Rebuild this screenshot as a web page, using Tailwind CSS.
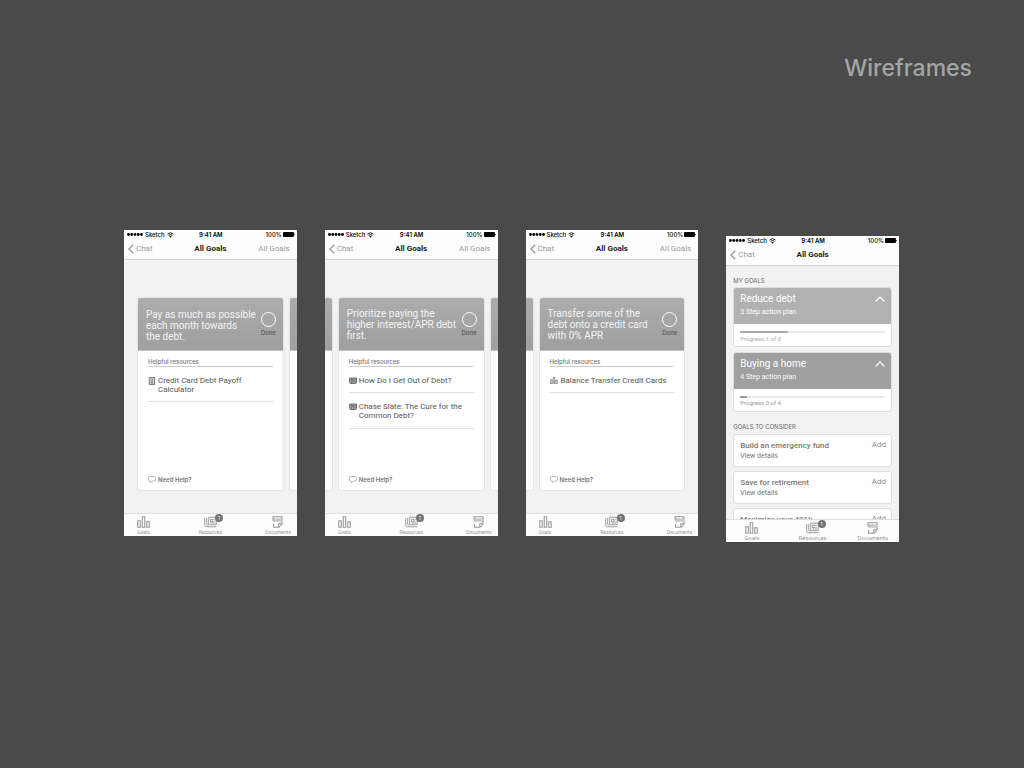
<!DOCTYPE html>
<html lang="en">
<head>
<meta charset="utf-8">
<meta name="viewport" content="width=device-width, initial-scale=1">
<title>Wireframes</title>
<script src="https://cdn.jsdelivr.net/npm/@tailwindcss/browser@4"></script>
</head>
<body class="min-h-screen bg-[#4a4a4a] font-['Roboto','Liberation_Sans',sans-serif] text-[#666]">
<svg class="hidden" aria-hidden="true">
  <symbol id="dots" viewBox="0 0 32 6"><g fill="currentColor"><circle cx="3" cy="3" r="2.800"/><circle cx="9.500" cy="3" r="2.800"/><circle cx="16" cy="3" r="2.800"/><circle cx="22.500" cy="3" r="2.800"/><circle cx="29" cy="3" r="2.800"/></g></symbol>
  <symbol id="wifi" viewBox="0 0 14 12"><path d="M7 11.500 4.600 8.500a3.500 3.500 0 0 1 4.800 0z" fill="currentColor"/><path d="M3.200 6.800a5.500 5.500 0 0 1 7.600 0M1 4.200a8.700 8.700 0 0 1 12 0" fill="none" stroke="currentColor" stroke-width="1.800"/></symbol>
  <symbol id="battery" viewBox="0 0 22 9"><rect width="20" height="9" rx="1.500" fill="currentColor"/><path d="M20.500 3c2 0 2 3 0 3z" fill="currentColor"/></symbol>
  <symbol id="back" viewBox="0 0 12 20"><path d="M10.500 1.500 2 10l8.500 8.500" fill="none" stroke="currentColor" stroke-width="2.600"/></symbol>
  <symbol id="up" viewBox="0 0 20 12"><path d="M1.500 10.500 10 2l8.500 8.500" fill="none" stroke="currentColor" stroke-width="2.400"/></symbol>
  <symbol id="bars" viewBox="0 0 26 24"><path d="M1.500 9.500h5v13h-5zM10.500 1.500h5v21h-5zM19.500 11.500h5v11h-5z" fill="none" stroke="currentColor" stroke-width="2.200"/></symbol>
  <symbol id="news" viewBox="0 0 26 24"><path d="M1.500 4v14.500c0 2 1 3 3 3h20M5.500 4v12.500c0 2.500 4 2.500 4 0V2.500h15v15H9.500M13 6.500h5V11h-5zM20.500 6.500h2M20.500 10.500h2M13 14h9.500" fill="none" stroke="currentColor" stroke-width="1.900"/></symbol>
  <symbol id="newsfill" viewBox="0 0 16 14"><path d="M1 2h14v9.500l-1.500 1.500h-11L1 11.500z" fill="#aaa" stroke="currentColor" stroke-width="1.800"/><path d="M5 2v10M7 4.500h3V7H7zM12 5h3M7 9.500h7" fill="none" stroke="currentColor" stroke-width="1.400"/></symbol>
  <symbol id="doc" viewBox="0 0 22 24"><path d="M2 9V1.500h18V16l-6 6.500H3V16M20 15.500h-6.500v6.500" fill="none" stroke="currentColor" stroke-width="2.100"/><path d="M3.500 5.500h3v5h-3zM9.500 5.500h3v5h-3zM18.500 5.500h-3v5h3" fill="none" stroke="currentColor" stroke-width="1.500"/></symbol>
  <symbol id="calc" viewBox="0 0 12 15"><path d="M1 1h10v13H1z" fill="#ddd" stroke="currentColor" stroke-width="1.600"/><path d="M3 4h6M3 7.500h6M3 11h6M6 7v5" stroke="currentColor" stroke-width="1.200"/></symbol>
  <symbol id="chat" viewBox="0 0 16 14"><path d="M3.500 1h9A2.500 2.500 0 0 1 15 3.500v4a2.500 2.500 0 0 1-2.500 2.500H8l-3.500 3V10h-1A2.500 2.500 0 0 1 1 7.500v-4A2.500 2.500 0 0 1 3.500 1z" fill="none" stroke="currentColor" stroke-width="1.300"/></symbol>
</svg>

<header class="flex justify-end pt-[50px] pr-[52px]">
  <h1 class="font-['Inter','Liberation_Sans',sans-serif] text-[23px] leading-9 font-medium text-[#a2a6a5]">Wireframes</h1>
</header>

<main class="grid grid-cols-4 items-start gap-7 pt-[144px] pr-[125px] pl-[124px]">

  <section class="flex h-[306px] flex-col overflow-hidden bg-[#f2f2f2]">
    <div class="grid grid-cols-3 items-center bg-[#fdfdfd] pr-[2px] pl-[3px] font-['Inter','Liberation_Sans',sans-serif] text-[6px] leading-[9px] font-medium text-black">
      <div class="flex items-center gap-[2px]"><svg class="h-[3px] w-[16px] shrink-0"><use href="#dots"/></svg><span>Sketch</span><svg class="h-[6px] w-[7px] shrink-0"><use href="#wifi"/></svg></div>
      <span class="text-center font-semibold">9:41 AM</span>
      <div class="flex items-center justify-end gap-px">100%<svg class="h-[5px] w-[12px]"><use href="#battery"/></svg></div>
    </div>
    <nav class="grid grid-cols-3 items-center border-b border-[#d4d4d4] bg-[#fdfdfd] px-[4px] text-[8px] leading-[20px] text-[#999]">
      <a href="#" class="flex items-center gap-[2px]"><svg class="h-[10px] w-[6px]"><use href="#back"/></svg>Chat</a>
      <h2 class="text-center font-bold text-[#222]">All Goals</h2>
      <a href="#" class="pr-[3px] text-right whitespace-nowrap">All Goals</a>
    </nav>
    <div class="flex flex-1 gap-[7px] pt-[38px] pb-[23px]">
      <div class="w-[7px]"></div>
      <article class="flex flex-1 flex-col overflow-hidden rounded-[2px] bg-white shadow-[0_0_2px_rgba(0,0,0,0.2)]">
        <header class="flex h-[53px] items-center justify-between border-b border-[#c4c4c4] bg-linear-to-b from-[#acacac] to-[#9f9f9f] pr-[7px] pl-[8px] text-[#f4f4f4]">
          <h3 class="pt-[2px] text-[10px] leading-[11px] whitespace-nowrap">Pay as much as possible<br>each month towards<br>the debt.</h3>
          <label class="flex w-[15px] flex-col items-center gap-[2px] font-['Inter','Liberation_Sans',sans-serif] text-[6px] leading-[8px] font-medium text-[#555]"><input type="checkbox" class="size-[15px] appearance-none rounded-full border border-white checked:bg-white">Done</label>
        </header>
        <div class="flex flex-1 flex-col px-[10px] pt-[7px] pb-[6px]">
          <h4 class="border-b border-[#ccc] font-['Inter','Liberation_Sans',sans-serif] text-[6px] leading-[8px] font-medium text-[#777]">Helpful resources</h4>
          <ul class="text-[8px] leading-[9px] text-[#555]">
            <li class="border-b border-[#ddd] pt-[9px] pb-[7px]"><a href="#" class="flex gap-[2px]"><svg class="mt-px h-[8px] w-[8px] shrink-0 text-[#666]"><use href="#calc"/></svg><span>Credit Card Debt Payoff<br>Calculator</span></a></li>
          </ul>
          <a href="#" class="mt-auto flex items-center gap-[2px] font-['Inter','Liberation_Sans',sans-serif] text-[6px] leading-[9px] font-semibold text-[#777]"><svg class="h-[7px] w-[8px] text-[#999]"><use href="#chat"/></svg>Need Help?</a>
        </div>
      </article>
      <div class="w-[7px] overflow-hidden rounded-l-[2px] bg-white shadow-[0_0_2px_rgba(0,0,0,0.2)]"><div class="h-[53px] border-b border-[#c4c4c4] bg-linear-to-b from-[#acacac] to-[#9f9f9f]"></div></div>
    </div>
    <nav class="grid grid-cols-3 border-t border-[#ddd] bg-[#fdfdfd] pt-[2px] pr-[6px] pb-px pl-[13px] text-[5px] leading-[6px] text-[#999]">
      <a href="#" class="flex flex-col items-center gap-px justify-self-start"><svg class="h-[12px] w-[13px]"><use href="#bars"/></svg>Goals</a>
      <a href="#" class="relative -ml-[7px] flex flex-col items-center gap-px justify-self-center"><svg class="h-[12px] w-[13px]"><use href="#news"/></svg>Resources<span class="absolute -top-[2px] -right-px size-[8px] rounded-full bg-[#737373] text-center text-[5px] leading-[8px] text-white">1</span></a>
      <a href="#" class="flex flex-col items-center gap-px justify-self-end"><svg class="h-[12px] w-[11px]"><use href="#doc"/></svg>Documents</a>
    </nav>
  </section>

  <section class="flex h-[306px] flex-col overflow-hidden bg-[#f2f2f2]">
    <div class="grid grid-cols-3 items-center bg-[#fdfdfd] pr-[2px] pl-[3px] font-['Inter','Liberation_Sans',sans-serif] text-[6px] leading-[9px] font-medium text-black">
      <div class="flex items-center gap-[2px]"><svg class="h-[3px] w-[16px] shrink-0"><use href="#dots"/></svg><span>Sketch</span><svg class="h-[6px] w-[7px] shrink-0"><use href="#wifi"/></svg></div>
      <span class="text-center font-semibold">9:41 AM</span>
      <div class="flex items-center justify-end gap-px">100%<svg class="h-[5px] w-[12px]"><use href="#battery"/></svg></div>
    </div>
    <nav class="grid grid-cols-3 items-center border-b border-[#d4d4d4] bg-[#fdfdfd] px-[4px] text-[8px] leading-[20px] text-[#999]">
      <a href="#" class="flex items-center gap-[2px]"><svg class="h-[10px] w-[6px]"><use href="#back"/></svg>Chat</a>
      <h2 class="text-center font-bold text-[#222]">All Goals</h2>
      <a href="#" class="pr-[3px] text-right whitespace-nowrap">All Goals</a>
    </nav>
    <div class="flex flex-1 gap-[7px] pt-[38px] pb-[23px]">
      <div class="w-[7px] overflow-hidden rounded-r-[2px] bg-white shadow-[0_0_2px_rgba(0,0,0,0.2)]"><div class="h-[53px] border-b border-[#c4c4c4] bg-linear-to-b from-[#acacac] to-[#9f9f9f]"></div></div>
      <article class="flex flex-1 flex-col overflow-hidden rounded-[2px] bg-white shadow-[0_0_2px_rgba(0,0,0,0.2)]">
        <header class="flex h-[53px] items-center justify-between border-b border-[#c4c4c4] bg-linear-to-b from-[#acacac] to-[#9f9f9f] pr-[7px] pl-[8px] text-[#f4f4f4]">
          <h3 class="text-[10px] leading-[11px] whitespace-nowrap">Prioritize paying the<br>higher interest/APR debt<br>first.</h3>
          <label class="flex w-[15px] flex-col items-center gap-[2px] font-['Inter','Liberation_Sans',sans-serif] text-[6px] leading-[8px] font-medium text-[#555]"><input type="checkbox" class="size-[15px] appearance-none rounded-full border border-white checked:bg-white">Done</label>
        </header>
        <div class="flex flex-1 flex-col px-[10px] pt-[7px] pb-[6px]">
          <h4 class="border-b border-[#ccc] font-['Inter','Liberation_Sans',sans-serif] text-[6px] leading-[8px] font-medium text-[#777]">Helpful resources</h4>
          <ul class="text-[8px] leading-[9px] text-[#555]">
            <li class="border-b border-[#ddd] pt-[9px] pb-[7px]"><a href="#" class="flex gap-[2px]"><svg class="mt-px h-[7px] w-[8px] shrink-0 text-[#666]"><use href="#newsfill"/></svg><span class="whitespace-nowrap">How Do I Get Out of Debt?</span></a></li>
            <li class="border-b border-[#ddd] pt-[9px] pb-[8px]"><a href="#" class="flex gap-[2px]"><svg class="mt-px h-[7px] w-[8px] shrink-0 text-[#666]"><use href="#newsfill"/></svg><span class="whitespace-nowrap">Chase Slate: The Cure for the<br>Common Debt?</span></a></li>
          </ul>
          <a href="#" class="mt-auto flex items-center gap-[2px] font-['Inter','Liberation_Sans',sans-serif] text-[6px] leading-[9px] font-semibold text-[#777]"><svg class="h-[7px] w-[8px] text-[#999]"><use href="#chat"/></svg>Need Help?</a>
        </div>
      </article>
      <div class="w-[7px] overflow-hidden rounded-l-[2px] bg-white shadow-[0_0_2px_rgba(0,0,0,0.2)]"><div class="h-[53px] border-b border-[#c4c4c4] bg-linear-to-b from-[#acacac] to-[#9f9f9f]"></div></div>
    </div>
    <nav class="grid grid-cols-3 border-t border-[#ddd] bg-[#fdfdfd] pt-[2px] pr-[6px] pb-px pl-[13px] text-[5px] leading-[6px] text-[#999]">
      <a href="#" class="flex flex-col items-center gap-px justify-self-start"><svg class="h-[12px] w-[13px]"><use href="#bars"/></svg>Goals</a>
      <a href="#" class="relative -ml-[7px] flex flex-col items-center gap-px justify-self-center"><svg class="h-[12px] w-[13px]"><use href="#news"/></svg>Resources<span class="absolute -top-[2px] -right-px size-[8px] rounded-full bg-[#737373] text-center text-[5px] leading-[8px] text-white">1</span></a>
      <a href="#" class="flex flex-col items-center gap-px justify-self-end"><svg class="h-[12px] w-[11px]"><use href="#doc"/></svg>Documents</a>
    </nav>
  </section>

  <section class="flex h-[306px] flex-col overflow-hidden bg-[#f2f2f2]">
    <div class="grid grid-cols-3 items-center bg-[#fdfdfd] pr-[2px] pl-[3px] font-['Inter','Liberation_Sans',sans-serif] text-[6px] leading-[9px] font-medium text-black">
      <div class="flex items-center gap-[2px]"><svg class="h-[3px] w-[16px] shrink-0"><use href="#dots"/></svg><span>Sketch</span><svg class="h-[6px] w-[7px] shrink-0"><use href="#wifi"/></svg></div>
      <span class="text-center font-semibold">9:41 AM</span>
      <div class="flex items-center justify-end gap-px">100%<svg class="h-[5px] w-[12px]"><use href="#battery"/></svg></div>
    </div>
    <nav class="grid grid-cols-3 items-center border-b border-[#d4d4d4] bg-[#fdfdfd] px-[4px] text-[8px] leading-[20px] text-[#999]">
      <a href="#" class="flex items-center gap-[2px]"><svg class="h-[10px] w-[6px]"><use href="#back"/></svg>Chat</a>
      <h2 class="text-center font-bold text-[#222]">All Goals</h2>
      <a href="#" class="pr-[3px] text-right whitespace-nowrap">All Goals</a>
    </nav>
    <div class="flex flex-1 gap-[7px] pt-[38px] pb-[23px]">
      <div class="w-[7px] overflow-hidden rounded-r-[2px] bg-white shadow-[0_0_2px_rgba(0,0,0,0.2)]"><div class="h-[53px] border-b border-[#c4c4c4] bg-linear-to-b from-[#acacac] to-[#9f9f9f]"></div></div>
      <article class="flex flex-1 flex-col overflow-hidden rounded-[2px] bg-white shadow-[0_0_2px_rgba(0,0,0,0.2)]">
        <header class="flex h-[53px] items-center justify-between border-b border-[#c4c4c4] bg-linear-to-b from-[#acacac] to-[#9f9f9f] pr-[7px] pl-[8px] text-[#f4f4f4]">
          <h3 class="text-[10px] leading-[11px] whitespace-nowrap">Transfer some of the<br>debt onto a credit card<br>with 0% APR</h3>
          <label class="flex w-[15px] flex-col items-center gap-[2px] font-['Inter','Liberation_Sans',sans-serif] text-[6px] leading-[8px] font-medium text-[#555]"><input type="checkbox" class="size-[15px] appearance-none rounded-full border border-white checked:bg-white">Done</label>
        </header>
        <div class="flex flex-1 flex-col px-[10px] pt-[7px] pb-[6px]">
          <h4 class="border-b border-[#ccc] font-['Inter','Liberation_Sans',sans-serif] text-[6px] leading-[8px] font-medium text-[#777]">Helpful resources</h4>
          <ul class="text-[8px] leading-[9px] text-[#555]">
            <li class="border-b border-[#ddd] pt-[9px] pb-[7px]"><a href="#" class="flex gap-[3px]"><svg class="mt-px h-[7px] w-[8px] shrink-0 text-[#555]"><use href="#bars"/></svg><span class="whitespace-nowrap">Balance Transfer Credit Cards</span></a></li>
          </ul>
          <a href="#" class="mt-auto flex items-center gap-[2px] font-['Inter','Liberation_Sans',sans-serif] text-[6px] leading-[9px] font-semibold text-[#777]"><svg class="h-[7px] w-[8px] text-[#999]"><use href="#chat"/></svg>Need Help?</a>
        </div>
      </article>
      <div class="w-[7px]"></div>
    </div>
    <nav class="grid grid-cols-3 border-t border-[#ddd] bg-[#fdfdfd] pt-[2px] pr-[6px] pb-px pl-[13px] text-[5px] leading-[6px] text-[#999]">
      <a href="#" class="flex flex-col items-center gap-px justify-self-start"><svg class="h-[12px] w-[13px]"><use href="#bars"/></svg>Goals</a>
      <a href="#" class="relative -ml-[7px] flex flex-col items-center gap-px justify-self-center"><svg class="h-[12px] w-[13px]"><use href="#news"/></svg>Resources<span class="absolute -top-[2px] -right-px size-[8px] rounded-full bg-[#737373] text-center text-[5px] leading-[8px] text-white">1</span></a>
      <a href="#" class="flex flex-col items-center gap-px justify-self-end"><svg class="h-[12px] w-[11px]"><use href="#doc"/></svg>Documents</a>
    </nav>
  </section>

  <section class="mt-[6px] flex h-[306px] flex-col overflow-hidden bg-[#f2f2f2]">
    <div class="grid grid-cols-3 items-center bg-[#fdfdfd] pr-[2px] pl-[3px] font-['Inter','Liberation_Sans',sans-serif] text-[6px] leading-[9px] font-medium text-black">
      <div class="flex items-center gap-[2px]"><svg class="h-[3px] w-[16px] shrink-0"><use href="#dots"/></svg><span>Sketch</span><svg class="h-[6px] w-[7px] shrink-0"><use href="#wifi"/></svg></div>
      <span class="text-center font-semibold">9:41 AM</span>
      <div class="flex items-center justify-end gap-px">100%<svg class="h-[5px] w-[12px]"><use href="#battery"/></svg></div>
    </div>
    <nav class="grid grid-cols-3 items-center border-b border-[#d4d4d4] bg-[#fdfdfd] px-[4px] text-[8px] leading-[20px] text-[#999]">
      <a href="#" class="flex items-center gap-[2px]"><svg class="h-[10px] w-[6px]"><use href="#back"/></svg>Chat</a>
      <h2 class="text-center font-bold text-[#222]">All Goals</h2>
    </nav>
    <div class="min-h-0 flex-1 overflow-hidden px-[7px] pt-[11px]">
      <h3 class="font-['Inter','Liberation_Sans',sans-serif] text-[6px] leading-[8px] text-[#666]">MY GOALS</h3>
      <article class="mt-[2px] h-[60px] overflow-hidden rounded-[3px] border border-[#ddd] bg-white">
        <button class="flex h-[36px] w-full items-start justify-between bg-[#b1b1b1] px-[6px] pt-[5px] text-left text-white"><span><span class="block text-[10px] leading-[12px]">Reduce debt</span><span class="mt-[2px] block text-[7px] leading-[10px]">3 Step action plan</span></span><svg class="mt-[3px] h-[6px] w-[10px]"><use href="#up"/></svg></button>
        <div class="px-[6px] pt-[7px] text-[6px] leading-[8px] text-[#aaa]"><div class="h-[2px] bg-[#e8e8e8]"><div class="h-full bg-[#aaa]" style="width:33.3%"></div></div><p class="mt-[2px]">Progress 1 of 3</p></div>
      </article>
      <article class="mt-[5px] h-[60px] overflow-hidden rounded-[3px] border border-[#ddd] bg-white">
        <button class="flex h-[36px] w-full items-start justify-between bg-[#a0a0a0] px-[6px] pt-[5px] text-left text-white"><span><span class="block text-[10px] leading-[12px]">Buying a home</span><span class="mt-[2px] block text-[7px] leading-[10px]">4 Step action plan</span></span><svg class="mt-[3px] h-[6px] w-[10px]"><use href="#up"/></svg></button>
        <div class="px-[6px] pt-[7px] text-[6px] leading-[8px] text-[#999]"><div class="h-[2px] bg-[#e8e8e8]"><div class="h-full bg-[#999]" style="width:5%"></div></div><p class="mt-px">Progress 0 of 4</p></div>
      </article>
      <h3 class="mt-[11px] font-['Inter','Liberation_Sans',sans-serif] text-[6px] leading-[8px] text-[#666]">GOALS TO CONSIDER</h3>
      <div class="mt-[3px] flex flex-col gap-[4px]">
        <article class="flex h-[33px] items-start justify-between rounded-[3px] border border-[#ddd] bg-white pt-[5px] pr-[5px] pl-[6px]"><div><h4 class="text-[8px] leading-[11px] font-medium text-[#777]">Build an emergency fund</h4><a href="#" class="block text-[7px] leading-[10px] text-[#777]">View details</a></div><button class="text-[8px] leading-[10px] text-[#888]">Add</button></article>
        <article class="flex h-[33px] items-start justify-between rounded-[3px] border border-[#ddd] bg-white pt-[5px] pr-[5px] pl-[6px]"><div><h4 class="text-[8px] leading-[11px] font-medium text-[#777]">Save for retirement</h4><a href="#" class="block text-[7px] leading-[10px] text-[#777]">View details</a></div><button class="text-[8px] leading-[10px] text-[#888]">Add</button></article>
        <article class="flex h-[33px] items-start justify-between rounded-[3px] border border-[#ddd] bg-white pt-[5px] pr-[5px] pl-[6px]"><h4 class="text-[8px] leading-[11px] font-medium text-[#777]">Maximize your 401k</h4><button class="text-[8px] leading-[10px] text-[#888]">Add</button></article>
      </div>
    </div>
    <nav class="grid grid-cols-3 border-t border-[#ddd] bg-[#fdfdfd] pt-[2px] pr-[11px] pb-px pl-[18px] text-[6px] leading-[7px] text-[#999]">
      <a href="#" class="flex flex-col items-center justify-self-start"><svg class="h-[12px] w-[13px]"><use href="#bars"/></svg>Goals</a>
      <a href="#" class="relative -ml-[7px] flex flex-col items-center justify-self-center"><svg class="h-[12px] w-[13px]"><use href="#news"/></svg>Resources<span class="absolute -top-[2px] right-px size-[8px] rounded-full bg-[#737373] text-center text-[5px] leading-[8px] text-white">1</span></a>
      <a href="#" class="flex flex-col items-center justify-self-end"><svg class="h-[12px] w-[11px]"><use href="#doc"/></svg>Documents</a>
    </nav>
  </section>
</main>
</body>
</html>
